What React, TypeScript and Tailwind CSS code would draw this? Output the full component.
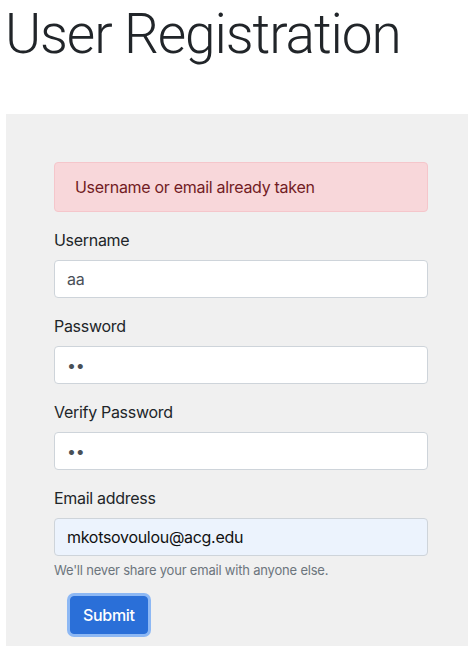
import React from "react";

const font = { fontFamily: "Inter, 'Noto Sans', sans-serif" };

interface FieldProps {
  label: string;
  type: string;
  value: string;
  autofilled?: boolean;
  help?: string;
}

const Field: React.FC<FieldProps> = ({ label, type, value, autofilled, help }) => (
  <div className="mb-4">
    <label className="block mb-2 text-[16px] leading-6 text-[#212529]">{label}</label>
    <input
      type={type}
      defaultValue={value}
      readOnly
      className={`block w-full h-[38px] px-3 text-[16px] tracking-[-0.3px] border border-[#ced4da] rounded-[4px] outline-none ${
        autofilled ? "bg-[#ecf3fd] text-[#111111]" : "bg-white text-[#495057]"
      }`}
    />
    {help && (
      <small className="block mt-1 text-[13px] leading-5 tracking-[-0.2px] text-[#6c757d]">{help}</small>
    )}
  </div>
);

export default function App() {
  return (
    <div className="min-h-[647px] bg-white tracking-[-0.3px]" style={font}>
      <h1
        className="pl-[5px] pt-[1px] text-[55px] leading-[67px] font-light text-[#212529] tracking-[-1.1px]"
        style={{ fontFamily: "Roboto, Inter, sans-serif" }}
      >
        User Registration
      </h1>
      <div className="mt-[46px] ml-[6px] bg-[#f0f0f0] pt-12 pl-12 pr-10 pb-3">
        <div className="mb-4 px-5 py-3 text-[16px] leading-6 text-[#721c24] bg-[#f8d7da] border border-[#f5c6cb] rounded-[4px]">
          Username or email already taken
        </div>
        <Field label="Username" type="text" value="aa" />
        <Field label="Password" type="password" value="aa" />
        <Field label="Verify Password" type="password" value="aa" />
        <Field
          label="Email address"
          type="email"
          value="mkotsovoulou@acg.edu"
          autofilled
          help="We'll never share your email with anyone else."
        />
        <div className="pl-4">
          <button className="h-[38px] px-3 text-[16px] font-medium text-white bg-[#2a6fd8] border border-[#2a6fd8] rounded-[4px] ring-[3px] ring-[#8db8f4]">
            Submit
          </button>
        </div>
      </div>
    </div>
  );
}
